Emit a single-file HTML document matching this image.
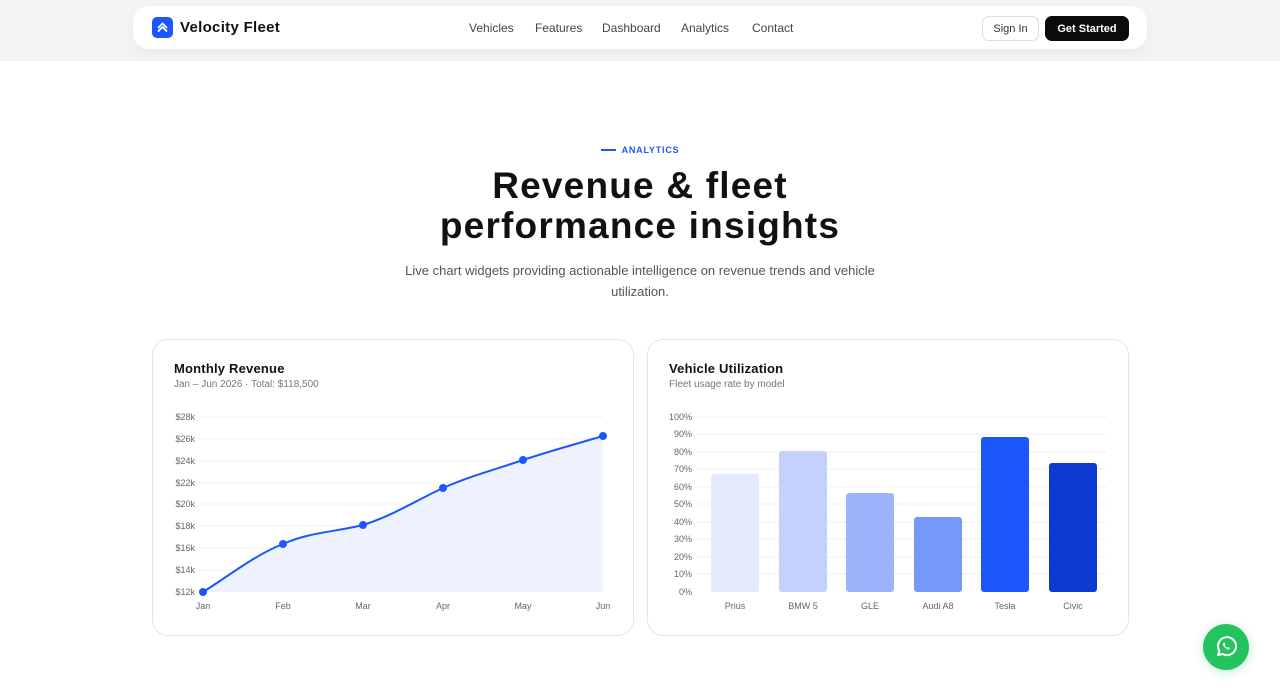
<!DOCTYPE html>
<html><head><meta charset="utf-8"><style>
*{margin:0;padding:0;box-sizing:border-box}
body{width:1280px;height:692px;overflow:hidden;background:#fff;font-family:"Liberation Sans",sans-serif;position:relative;color:#111}
.top{position:absolute;left:0;top:0;width:1280px;height:61px;background:#f4f4f6}
.nav{position:absolute;left:133px;top:6px;width:1014px;height:43px;background:#fff;border-radius:16px;box-shadow:0 4px 14px rgba(0,0,0,.05)}
.logo{position:absolute;left:19px;top:11px;width:21px;height:21px;background:#1d57fb;border-radius:5px}
.brand{position:absolute;left:47px;top:13px;font-size:15px;font-weight:bold;letter-spacing:0.3px}
.links a{position:absolute;top:15px;font-size:12px;color:#444;text-decoration:none}
.signin{position:absolute;left:849px;top:10px;width:57px;height:25px;border:1px solid #ddd;border-radius:7px;font-size:11px;color:#333;text-align:center;line-height:25px}
.gs{position:absolute;left:912px;top:10px;width:84px;height:25px;background:#0b0b0d;border-radius:7px;font-size:11px;color:#fff;font-weight:bold;text-align:center;line-height:26px}
.eyebrow{position:absolute;left:0;width:1280px;top:145px;text-align:center;font-size:9px;font-weight:bold;color:#1d57fb;letter-spacing:0.8px}
.eyebrow span{display:inline-block;width:15px;height:2px;background:#1d57fb;vertical-align:middle;margin-right:6px;position:relative;top:-1px}
h1{position:absolute;left:0;width:1280px;top:166px;text-align:center;font-size:37px;line-height:40px;font-weight:bold;letter-spacing:1.2px}
.sub{position:absolute;left:400px;width:480px;top:260px;text-align:center;font-size:13px;line-height:21px;color:#555}
.card{position:absolute;top:339px;height:297px;border:1px solid #e6e6ea;border-radius:16px;background:#fff}
.ct{position:absolute;left:21px;top:21px;font-size:13px;font-weight:bold;letter-spacing:0.2px}
.cs{position:absolute;left:21px;top:39px;font-size:10px;color:#777}
svg text{font-family:"Liberation Sans",sans-serif;font-size:9px;fill:#666}
.wa{position:absolute;left:1203px;top:624px;width:46px;height:46px;border-radius:50%;background:#25c35f;box-shadow:0 2px 10px rgba(37,195,95,.3)}
</style></head><body>
<div class="top"></div>
<div class="nav">
<div class="logo"><svg width="21" height="21" viewBox="0 0 21 21"><path d="M6.5 10.5l4-4 4 4M6.5 14l4-4 4 4" stroke="#fff" stroke-width="1.8" fill="none" stroke-linecap="round" stroke-linejoin="round"/></svg></div>
<div class="brand">Velocity Fleet</div>
<div class="links"><a style="left:336px">Vehicles</a><a style="left:402px">Features</a><a style="left:469px">Dashboard</a><a style="left:548px">Analytics</a><a style="left:619px">Contact</a></div>
<div class="signin">Sign In</div><div class="gs">Get Started</div>
</div>
<div class="eyebrow"><span></span>ANALYTICS</div>
<h1>Revenue &amp; fleet<br>performance insights</h1>
<div class="sub">Live chart widgets providing actionable intelligence on revenue trends and vehicle utilization.</div>
<div class="card" style="left:152px;width:482px"><div class="ct">Monthly Revenue</div><div class="cs">Jan – Jun 2026 · Total: $118,500</div></div>
<div class="card" style="left:647px;width:482px"><div class="ct">Vehicle Utilization</div><div class="cs">Fleet usage rate by model</div></div>
<svg style="position:absolute;left:0;top:0" width="1280" height="692">
<g stroke="#f0f0f3" stroke-width="1">
<line x1="198" x2="603" y1="417" y2="417"/><line x1="198" x2="603" y1="439" y2="439"/><line x1="198" x2="603" y1="461" y2="461"/><line x1="198" x2="603" y1="483" y2="483"/><line x1="198" x2="603" y1="504" y2="504"/><line x1="198" x2="603" y1="526" y2="526"/><line x1="198" x2="603" y1="548" y2="548"/><line x1="198" x2="603" y1="570" y2="570"/>
<line x1="697" x2="1107" y1="417" y2="417"/><line x1="697" x2="1107" y1="434" y2="434"/><line x1="697" x2="1107" y1="452" y2="452"/><line x1="697" x2="1107" y1="469" y2="469"/><line x1="697" x2="1107" y1="487" y2="487"/><line x1="697" x2="1107" y1="504" y2="504"/><line x1="697" x2="1107" y1="522" y2="522"/><line x1="697" x2="1107" y1="539" y2="539"/><line x1="697" x2="1107" y1="557" y2="557"/><line x1="697" x2="1107" y1="574" y2="574"/>
</g>
<g text-anchor="end"><text x="195" y="420">$28k</text><text x="195" y="442">$26k</text><text x="195" y="464">$24k</text><text x="195" y="486">$22k</text><text x="195" y="507">$20k</text><text x="195" y="529">$18k</text><text x="195" y="551">$16k</text><text x="195" y="573">$14k</text><text x="195" y="595">$12k</text>
<text x="692" y="420">100%</text><text x="692" y="437">90%</text><text x="692" y="455">80%</text><text x="692" y="472">70%</text><text x="692" y="490">60%</text><text x="692" y="507">50%</text><text x="692" y="525">40%</text><text x="692" y="542">30%</text><text x="692" y="560">20%</text><text x="692" y="577">10%</text><text x="692" y="595">0%</text></g>
<g text-anchor="middle"><text x="203" y="609">Jan</text><text x="283" y="609">Feb</text><text x="363" y="609">Mar</text><text x="443" y="609">Apr</text><text x="523" y="609">May</text><text x="603" y="609">Jun</text>
<text x="735" y="609">Prius</text><text x="803" y="609">BMW 5</text><text x="870" y="609">GLE</text><text x="938" y="609">Audi A8</text><text x="1005" y="609">Tesla</text><text x="1073" y="609">Civic</text></g>
<path d="M203 592C230 575 255 555 283 544C310 532 335 532 363 525C392 516 415 501 443 488C470 476 497 469 523 460C550 451 576 444 603 436L603 592Z" fill="#eef2fe"/>
<path d="M203 592C230 575 255 555 283 544C310 532 335 532 363 525C392 516 415 501 443 488C470 476 497 469 523 460C550 451 576 444 603 436" fill="none" stroke="#1d57fb" stroke-width="2"/>
<g fill="#1d57fb"><circle cx="203" cy="592" r="4"/><circle cx="283" cy="544" r="4"/><circle cx="363" cy="525" r="4"/><circle cx="443" cy="488" r="4"/><circle cx="523" cy="460" r="4"/><circle cx="603" cy="436" r="4"/></g>
<rect x="711" y="474" width="48" height="118" rx="3" fill="#e5ebfd"/>
<rect x="779" y="451" width="48" height="141" rx="3" fill="#c4d1fc"/>
<rect x="846" y="493" width="48" height="99" rx="3" fill="#9db4fb"/>
<rect x="914" y="517" width="48" height="75" rx="3" fill="#7598fa"/>
<rect x="981" y="437" width="48" height="155" rx="3" fill="#1d57fb"/>
<rect x="1049" y="463" width="48" height="129" rx="3" fill="#0b3bd0"/>
</svg>
<div class="wa"><svg width="46" height="46" viewBox="0 0 46 46"><path d="M15 31l1.3-4.2A9 9 0 1 1 19.6 30z" fill="none" stroke="#fff" stroke-width="2" stroke-linejoin="round"/><path d="M20 19.5c0 3 3 6 6 6l1-1.5-2-1-1 .8c-1-.5-2-1.5-2.4-2.4l.8-1-1-2z" fill="#fff"/></svg></div>
</body></html>
